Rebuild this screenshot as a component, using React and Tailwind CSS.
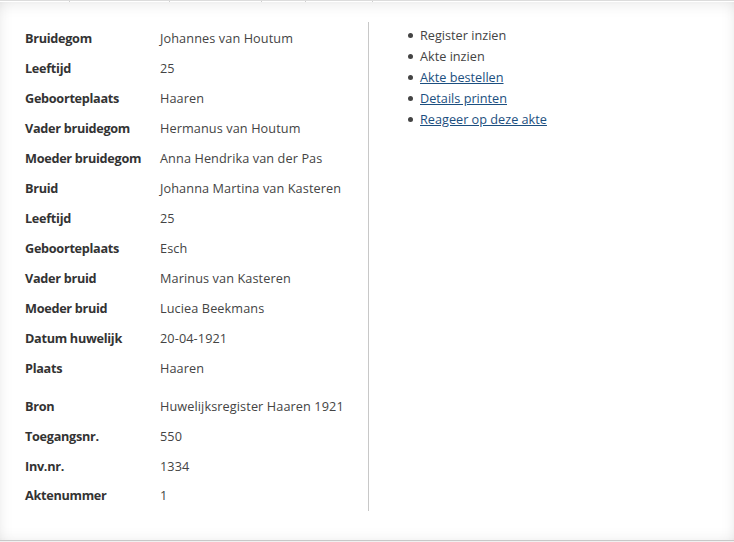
import React from "react";

const rowsA = [
  ["Bruidegom", "Johannes van Houtum"],
  ["Leeftijd", "25"],
  ["Geboorteplaats", "Haaren"],
  ["Vader bruidegom", "Hermanus van Houtum"],
  ["Moeder bruidegom", "Anna Hendrika van der Pas"],
  ["Bruid", "Johanna Martina van Kasteren"],
  ["Leeftijd", "25"],
  ["Geboorteplaats", "Esch"],
  ["Vader bruid", "Marinus van Kasteren"],
  ["Moeder bruid", "Luciea Beekmans"],
  ["Datum huwelijk", "20-04-1921"],
  ["Plaats", "Haaren"],
];
const rowsB = [
  ["Bron", "Huwelijksregister Haaren 1921"],
  ["Toegangsnr.", "550"],
  ["Inv.nr.", "1334"],
  ["Aktenummer", "1"],
];

function Row({ label, value }) {
  return (
    <div className="flex h-[30px] items-center">
      <div className="w-[135px] shrink-0 font-bold tracking-[-0.3px] text-[#333]">{label}</div>
      <div className="tracking-[0.1px] text-[#444]">{value}</div>
    </div>
  );
}

export default function App() {
  return (
    <div
      className="relative h-[542px] w-[734px] overflow-hidden bg-white text-[12.7px]"
      style={{ fontFamily: '"Open Sans", "Noto Sans", sans-serif' }}
    >
      <div className="flex h-[2px] border-t border-[#dcdcdc]">
        <div className="w-[70px] border-r border-[#d0d0d0]" />
        <div className="w-[100px] border-r border-[#d0d0d0]" />
        <div className="w-[92px] border-r border-[#d0d0d0]" />
        <div className="w-[44px] border-r border-[#d0d0d0]" />
        <div className="w-[67px] border-r border-[#d0d0d0]" />
      </div>
      <div className="flex h-[538px] shadow-[inset_0_10px_14px_-6px_rgba(0,0,0,0.07),inset_10px_0_14px_-8px_rgba(0,0,0,0.05),inset_-10px_0_14px_-8px_rgba(0,0,0,0.05),inset_0_-10px_14px_-8px_rgba(0,0,0,0.05)]">
        <div className="mt-[20px] flex h-[489px] w-[369px] shrink-0 flex-col border-r border-[#c8c8c8] pl-[25px] pt-[2px]">
          {rowsA.map(([l, v], i) => (
            <Row key={i} label={l} value={v} />
          ))}
          <div className="h-[8px]" />
          {rowsB.map(([l, v], i) => (
            <Row key={i} label={l} value={v} />
          ))}
        </div>
        <ul className="mt-[23px] pl-[39px] leading-[21px] text-[#444]">
          {[
            ["Register inzien", false],
            ["Akte inzien", false],
            ["Akte bestellen", true],
            ["Details printen", true],
            ["Reageer op deze akte", true],
          ].map(([t, link], i) => (
            <li key={i} className="flex items-center">
              <span className="mr-[7px] inline-block h-[5px] w-[5px] rounded-full bg-[#444]" />
              {link ? (
                <a href="#" className="text-[#1c4f80] underline">
                  {t}
                </a>
              ) : (
                <span>{t}</span>
              )}
            </li>
          ))}
        </ul>
      </div>
      <div className="h-[2px] border-t border-[#c8c8c8] bg-[#f0f0f0]" />
    </div>
  );
}
